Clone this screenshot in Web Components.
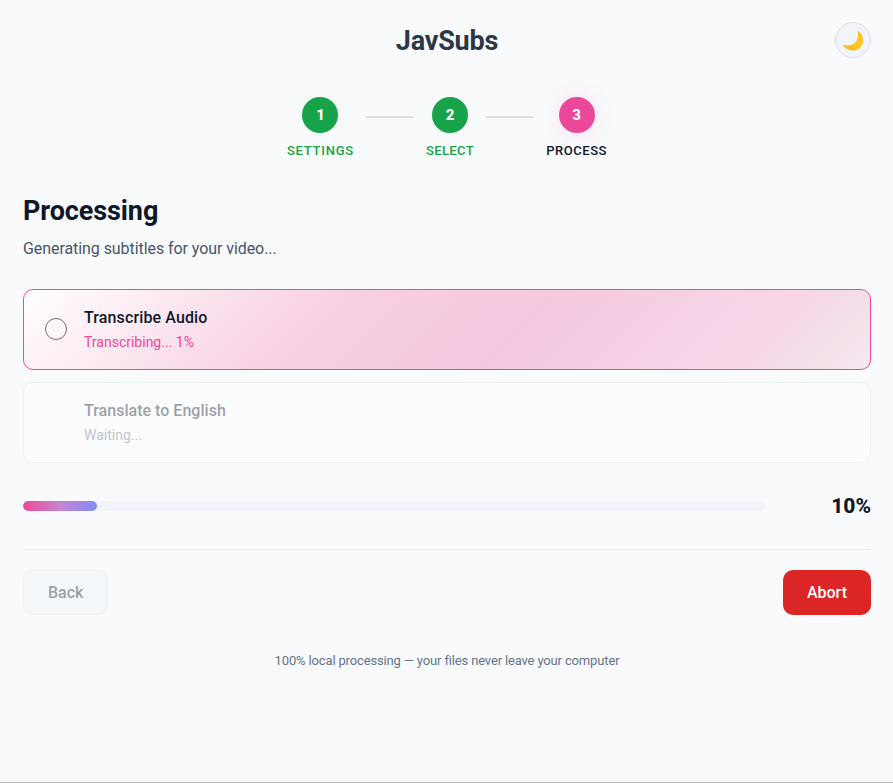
<!DOCTYPE html>
<html lang="en">
<head>
<meta charset="UTF-8">
<title>JavSubs</title>
<style>
    body {
        margin: 0;
        background: #f9fafc;
        color: #0f172a;
        font-family: Roboto, sans-serif;
        font-size: 16px;
    }
</style>
</head>
<body>
<subs-app>
    <app-header slot="header" name="JavSubs"></app-header>
    <step-list slot="steps">
        <step-item number="1" label="Settings" state="done" style="--tracking: 0.75px"></step-item>
        <step-line></step-line>
        <step-item number="2" label="Select" state="done" style="--tracking: 0.4px"></step-item>
        <step-line></step-line>
        <step-item number="3" label="Process" state="active" style="--tracking: 0.55px"></step-item>
    </step-list>
    <page-title>
        Processing
        <span slot="subtitle">Generating subtitles for your video...</span>
    </page-title>
    <task-card state="active">
        Transcribe Audio
        <span slot="status">Transcribing... 1%</span>
    </task-card>
    <task-card state="waiting">
        Translate to English
        <span slot="status">Waiting...</span>
    </task-card>
    <progress-row value="10"></progress-row>
    <action-bar>
        <app-button kind="secondary">Back</app-button>
        <app-button kind="danger">Abort</app-button>
    </action-bar>
    <span slot="footer">100% local processing — your files never leave your computer</span>
</subs-app>

<script>
class BaseElement extends HTMLElement {
    constructor(html){
        super();
        const template = document.createElement('template');
        template.innerHTML = html;
        this.attachShadow({ mode: 'open' });
        this.shadowRoot.appendChild(template.content.cloneNode(true));
    }
}

class SubsApp extends BaseElement {
    constructor(){
        super(`
            <style>
                :host {
                    display: block;
                    box-sizing: border-box;
                    height: 783px;
                    padding: 22px 22px 0 23px;
                    border-bottom: 1px solid #b4b6b9;
                    overflow: hidden;
                }
                footer {
                    margin-top: 38px;
                    text-align: center;
                    font-size: 13px;
                    line-height: 16px;
                    letter-spacing: -0.15px;
                    color: #64748b;
                }
            </style>
            <slot name="header"></slot>
            <slot name="steps"></slot>
            <main><slot></slot></main>
            <footer><slot name="footer"></slot></footer>
        `);
    }
}

class AppHeader extends BaseElement {
    constructor(){
        super(`
            <style>
                :host {
                    display: grid;
                    grid-template-columns: 36px 1fr 36px;
                    align-items: center;
                    height: 36px;
                }
                h1 {
                    grid-column: 2;
                    margin: 0;
                    padding-top: 2px;
                    text-align: center;
                    font-size: 27px;
                    line-height: 34px;
                    font-weight: 700;
                    letter-spacing: -0.2px;
                    color: #2d3748;
                }
                button {
                    display: grid;
                    place-items: center;
                    width: 36px;
                    height: 36px;
                    padding: 0;
                    border: 1px solid #dcdfe4;
                    border-radius: 50%;
                    background: #f1f5f9;
                }
                svg {
                    display: block;
                }
            </style>
            <h1></h1>
            <button aria-label="Toggle theme">
                <svg width="22" height="22" viewBox="0 0 22 22">
                    <defs>
                        <linearGradient id="moon" x1="1" y1="0" x2="0.3" y2="1">
                            <stop offset="0" stop-color="#fdb515"/>
                            <stop offset="0.5" stop-color="#ffca28"/>
                            <stop offset="1" stop-color="#fcb716"/>
                        </linearGradient>
                    </defs>
                    <path d="M16.100 1.900C19.700 4.400 22 9 20.900 13.700C19.700 18.500 15.500 21.500 11 21.500C6.500 21.500 3 19.400 1.200 16.600C.9 16 1.300 15.700 1.900 15.900C5.700 17.100 10.500 16.200 13.200 13.500C16 10.700 16.800 6.400 15.600 2.600C15.400 2 15.600 1.600 16.100 1.900Z" fill="url(#moon)"/>
                </svg>
            </button>
        `);
        this.shadowRoot.querySelector('h1').textContent = this.getAttribute('name');
    }
}

class StepList extends BaseElement {
    constructor(){
        super(`
            <style>
                :host {
                    display: flex;
                    justify-content: center;
                    gap: 12px;
                    margin-top: 39px;
                    height: 62px;
                }
            </style>
            <slot></slot>
        `);
    }
}

class StepItem extends BaseElement {
    constructor(){
        super(`
            <style>
                :host {
                    display: flex;
                    flex-direction: column;
                    align-items: center;
                    gap: 10px;
                    color: #16a34a;
                }
                .circle {
                    display: grid;
                    place-items: center;
                    width: 36px;
                    height: 36px;
                    border-radius: 50%;
                    background: #16a34a;
                    color: #fff;
                    font-size: 15px;
                    font-weight: 800;
                }
                .label {
                    font-size: 13px;
                    line-height: 16px;
                    font-weight: 500;
                    letter-spacing: var(--tracking);
                    text-transform: uppercase;
                }
                :host([state="active"]) {
                    color: #0f172a;
                }
                :host([state="active"]) .circle {
                    background: #ec4899;
                    box-shadow: 0 0 20px rgba(236, 72, 153, 0.15);
                }
            </style>
            <div class="circle"></div>
            <div class="label"></div>
        `);
        this.shadowRoot.querySelector('.circle').textContent = this.getAttribute('number');
        this.shadowRoot.querySelector('.label').textContent = this.getAttribute('label');
    }
}

class StepLine extends BaseElement {
    constructor(){
        super(`
            <style>
                :host {
                    display: block;
                    width: 48px;
                    height: 2px;
                    margin-top: 19px;
                    border-radius: 1px;
                    background: #dedfe2;
                }
            </style>
        `);
    }
}

class PageTitle extends BaseElement {
    constructor(){
        super(`
            <style>
                :host {
                    display: block;
                    margin-top: 35px;
                }
                h2 {
                    margin: 0;
                    font-size: 27px;
                    line-height: 34px;
                    font-weight: 700;
                    letter-spacing: -0.1px;
                }
                p {
                    margin: 9px 0 0;
                    font-size: 16px;
                    line-height: 24px;
                    letter-spacing: -0.07px;
                    color: #475569;
                }
            </style>
            <h2><slot></slot></h2>
            <p><slot name="subtitle"></slot></p>
        `);
    }
}

class TaskCard extends BaseElement {
    constructor(){
        super(`
            <style>
                :host {
                    display: flex;
                    align-items: center;
                    gap: 16px;
                    box-sizing: border-box;
                    height: 81px;
                    margin-top: 12px;
                    padding: 0 20px 1px;
                    border: 1px solid #dfe2e7;
                    border-radius: 10px;
                    background: #fff;
                }
                :host([state="active"]) {
                    margin-top: 28px;
                    border-color: #ec4899;
                    background: linear-gradient(135deg, #fff 0%, #f8d0e3 35%, #f5c8df 58%, #f6d5e9 80%, #f6d7e6 86%, #f3dfe9 92%, #f6e9f1 100%);
                }
                :host([state="waiting"]) {
                    opacity: 0.4;
                }
                .icon {
                    display: flex;
                    width: 24px;
                    height: 24px;
                    align-items: center;
                    justify-content: center;
                }
                :host([state="waiting"]) svg {
                    display: none;
                }
                h3 {
                    margin: 0;
                    font-size: 16px;
                    line-height: 24px;
                    font-weight: 500;
                    letter-spacing: 0.02px;
                }
                :host([state="active"]) h3 {
                    letter-spacing: 0.12px;
                }
                p {
                    margin: 1px 0 0;
                    font-size: 14px;
                    line-height: 22px;
                    color: #64748b;
                }
                :host([state="active"]) p {
                    color: #ec4899;
                }
            </style>
            <div class="icon">
                <svg width="24" height="24" viewBox="0 0 24 24">
                    <circle cx="12" cy="12" r="10.500" fill="none" stroke="#746e7e" stroke-width="1"/>
                </svg>
            </div>
            <div>
                <h3><slot></slot></h3>
                <p><slot name="status"></slot></p>
            </div>
        `);
    }
}

class ProgressRow extends BaseElement {
    constructor(){
        super(`
            <style>
                :host {
                    display: flex;
                    align-items: center;
                    justify-content: space-between;
                    height: 30px;
                    margin-top: 28px;
                }
                .track {
                    width: 742px;
                    height: 10px;
                    border-radius: 5px;
                    background: #f1f5f9;
                    overflow: hidden;
                }
                .fill {
                    height: 100%;
                    border-radius: 5px;
                    background: linear-gradient(90deg, #ec4899, #c684d0 50%, #818cf8);
                }
                .value {
                    font-size: 21px;
                    line-height: 30px;
                    font-weight: 800;
                }
            </style>
            <div class="track"><div class="fill"></div></div>
            <div class="value"></div>
        `);
        const value = this.getAttribute('value') + '%';
        this.shadowRoot.querySelector('.fill').style.width = value;
        this.shadowRoot.querySelector('.value').textContent = value;
    }
}

class ActionBar extends BaseElement {
    constructor(){
        super(`
            <style>
                :host {
                    display: flex;
                    justify-content: space-between;
                    margin-top: 28px;
                    padding-top: 20px;
                    border-top: 1px solid #e8eaee;
                }
            </style>
            <slot></slot>
        `);
    }
}

class AppButton extends BaseElement {
    constructor(){
        super(`
            <style>
                :host {
                    display: block;
                }
                button {
                    height: 45px;
                    padding: 0 24px;
                    border: 0;
                    border-radius: 10px;
                    background: #dc2626;
                    color: #fff;
                    font: 500 16px Roboto, sans-serif;
                }
                :host([kind="secondary"]) button {
                    border: 1px solid #dfe2e7;
                    background: #ecf5f9;
                    color: #0f172a;
                    opacity: 0.4;
                }
            </style>
            <button><slot></slot></button>
        `);
    }
}

window.customElements.define('subs-app', SubsApp);
window.customElements.define('app-header', AppHeader);
window.customElements.define('step-list', StepList);
window.customElements.define('step-item', StepItem);
window.customElements.define('step-line', StepLine);
window.customElements.define('page-title', PageTitle);
window.customElements.define('task-card', TaskCard);
window.customElements.define('progress-row', ProgressRow);
window.customElements.define('action-bar', ActionBar);
window.customElements.define('app-button', AppButton);
</script>
</body>
</html>
